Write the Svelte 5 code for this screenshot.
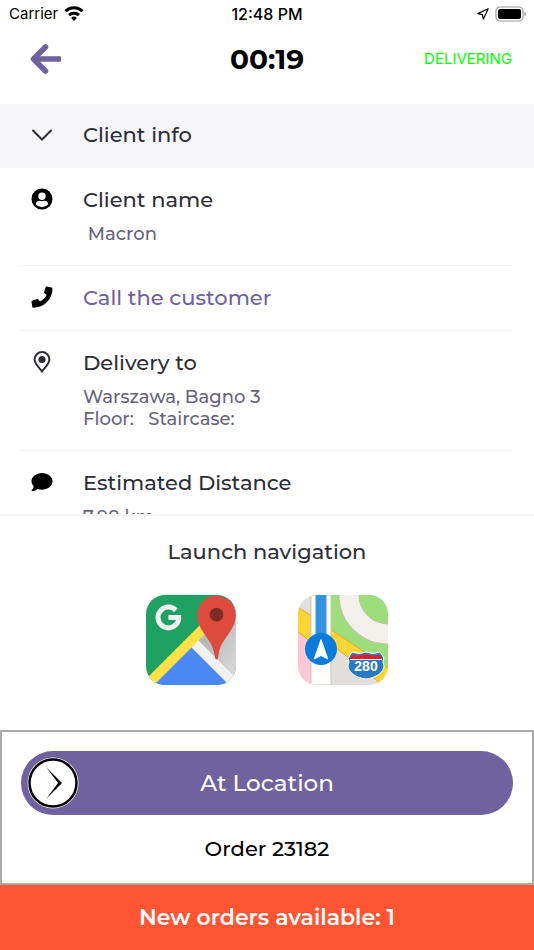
<script>
    let { elapsed = "00:19", status = "DELIVERING", orderNumber = 23182, newOrders = 1 } = $props();

    let clientInfoOpen = $state(true);

    let details = [
        { icon: "user", label: "Client name", value: " Macron" },
        { icon: "phone", label: "Call the customer", href: "tel:" },
        { icon: "pin", label: "Delivery to", value: "Warszawa, Bagno 3\nFloor:   Staircase:" },
        { icon: "comment", label: "Estimated Distance", value: "7.98 km" }
    ];

    function toggleClientInfo() {
        clientInfoOpen = !clientInfoOpen;
    }
</script>

<div class="app">
    <div class="status-bar">
        <div class="carrier">
            <span>Carrier</span>
            <svg width="20" height="16" viewBox="0 0 20 16" fill="none" stroke="#000" stroke-width="3">
                <path d="M1.5 5.2a12 12 0 0 1 17 0" />
                <path d="M5 9.2a7.2 7.2 0 0 1 10 0" />
                <path d="M7.1 12a4.2 4.2 0 0 1 5.8 0L10 15z" fill="#000" stroke="none" />
            </svg>
        </div>
        <time>12:48 PM</time>
        <div class="indicators">
            <svg width="12" height="12" viewBox="0 0 12 12" fill="none" stroke="#000" stroke-width="1.2" stroke-linejoin="round">
                <path d="M11.2.8.8 5.6l4.6 1 .9 4.6z" />
            </svg>
            <svg width="32" height="16" viewBox="0 0 32 16">
                <rect x="1" y="1" width="27" height="14" rx="4" fill="none" stroke="#999" stroke-width="1.2" />
                <rect x="3" y="3" width="23" height="10" rx="2" />
                <path d="M29.5 5.5c2 .7 2 4.3 0 5z" fill="#999" />
            </svg>
        </div>
    </div>

    <header>
        <button type="button" class="back" aria-label="Back">
            <svg width="32" height="30" viewBox="0 0 32 30" fill="none" stroke="#70629e" stroke-width="5.5" stroke-linecap="round" stroke-linejoin="round">
                <path d="M15.5 3 3.5 15l12 12" />
                <path d="M5 15h24" stroke-linecap="butt" />
                <path d="M28 12.3h2q1 0 1 1v3.4q0 1-1 1h-2z" fill="#70629e" stroke="none" />
            </svg>
        </button>
        <h1>{elapsed}</h1>
        <span class="status">{status}</span>
    </header>

    <button type="button" class="section-toggle" aria-expanded={clientInfoOpen} onclick={toggleClientInfo}>
        <span class="icon">
            <svg width="22" height="22" viewBox="0 0 22 22" fill="none" stroke="#2e2e3a" stroke-width="2" stroke-linecap="round">
                <path d="m2 6.5 9 9 9-9" />
            </svg>
        </span>
        <span>Client info</span>
    </button>

    <main>
        {#if clientInfoOpen}
            {#each details as detail}
                <section class="detail">
                    <span class="icon">
                        {#if detail.icon === "user"}
                            <svg width="22" height="22" viewBox="0 0 22 22">
                                <circle cx="11" cy="11" r="10.5" />
                                <circle cx="11" cy="8.3" r="3.7" fill="#fff" />
                                <path d="M4.7 16.2c.4-2.4 2.2-3.4 4-3.4 1.5.6 3.1.6 4.6 0 1.8 0 3.6 1 4 3.4a8.2 8.2 0 0 1-12.6 0z" fill="#fff" />
                            </svg>
                        {:else if detail.icon === "phone"}
                            <svg width="22" height="22" viewBox="0 0 22 22">
                                <path d="m15.6.5 5 .9q.9.2.9 1.1C21.5 13.3 13 21.7 2.3 21.7q-.9 0-1-.9L.5 16q-.1-.9.7-1.2l4.9-1.7q.8-.3 1.3.4l1.5 2.1c3-1.4 5.4-3.8 6.700-6.800l-2.100-1.600q-.7-.5-.4-1.300l1.500-4.700q.3-.8 1-.7z" />
                            </svg>
                        {:else if detail.icon === "pin"}
                            <svg width="22" height="22" viewBox="0 0 22 22" fill="none" stroke="#2e2e3a" stroke-width="2">
                                <path d="M11 20.3C8.5 16.8 3.6 12.9 3.6 8.5a7.4 7.4 0 0 1 14.8 0c0 4.4-4.9 8.3-7.4 11.8z" />
                                <circle cx="11" cy="8.5" r="3.6" fill="#2e2e3a" stroke="none" />
                            </svg>
                        {:else}
                            <svg width="22" height="22" viewBox="0 0 22 22">
                                <path d="M11 2C5.2 2 .5 5.7.5 10.3c0 2 .9 3.8 2.3 5.2C2.3 17.4.7 19.1.6 19.2c-.2.4 0 .8.4.8 2.5 0 4.4-1.2 5.5-2.1 1.4.5 2.9.8 4.5.8 5.8 0 10.500-3.800 10.500-8.400S16.800 2 11 2z" />
                            </svg>
                        {/if}
                    </span>
                    <div class="detail-body">
                        {#if detail.href}
                            <a href={detail.href}>{detail.label}</a>
                        {:else}
                            <h2>{detail.label}</h2>
                            <p>{detail.value}</p>
                        {/if}
                    </div>
                </section>
            {/each}
        {/if}
    </main>

    <section class="navigation">
        <h2>Launch navigation</h2>
        <div class="map-apps">
            <button type="button" aria-label="Google Maps">
                <svg width="90" height="90" viewBox="0 0 90 90">
                    <defs>
                        <clipPath id="google-tile"><rect width="90" height="90" rx="19" /></clipPath>
                        <linearGradient id="google-shade" x1="0" y1="0" x2="1" y2="1">
                            <stop offset="0.4" stop-color="#b8b8b8" />
                            <stop offset="1" stop-color="#dedede" />
                        </linearGradient>
                    </defs>
                    <g clip-path="url(#google-tile)">
                        <rect width="90" height="90" fill="#1fa261" />
                        <path d="M48 49 90 7v83z" fill="url(#google-shade)" />
                        <path d="M45 52 88 95H2z" fill="#4a89f3" />
                        <path d="m52 45 46 46-7 7-46-46z" fill="#f1f1f1" />
                        <path d="M54 30-4 88l8 6 55-55z" fill="#ffe047" />
                        <path d="M70.5 64.5c-1.5 0-1.5-2-2-5C66 43 51.2 36 51.2 20a19.3 19.3 0 0 1 38.6 0C89.8 36 75 43 72.5 59.5c-.5 3-.5 5-2 5z" fill="#dc4b3e" />
                        <circle cx="70.5" cy="19.7" r="6.9" fill="#7f2c27" />
                        <circle cx="22.4" cy="22.5" r="10.4" fill="none" stroke="#f1f1f1" stroke-width="5" stroke-dasharray="57 9" />
                        <rect x="22.4" y="20" width="12.6" height="5" fill="#f1f1f1" />
                    </g>
                </svg>
            </button>
            <button type="button" aria-label="Apple Maps">
                <svg width="90" height="90" viewBox="0 0 90 90">
                    <defs>
                        <clipPath id="apple-tile"><rect width="90" height="90" rx="19" /></clipPath>
                    </defs>
                    <g clip-path="url(#apple-tile)">
                        <rect width="90" height="90" fill="#e2dfda" />
                        <path d="M32 0h58v76L32 36z" fill="#9edd7b" />
                        <circle cx="90" cy="0" r="39" fill="none" stroke="#c5bfae" stroke-width="21" />
                        <circle cx="90" cy="0" r="39" fill="none" stroke="#f3f0ec" stroke-width="19" />
                        <path d="M0 36 14 47v43H0z" fill="#ffc8d5" />
                        <path d="m-2 11 16 10v27L-2 35zM32 34l60 40v22L32 48z" fill="#ffd536" stroke="#e9a52d" />
                        <path d="M13 0h20v90H13z" fill="#fff" stroke="#c9c5bd" />
                        <path d="M17.5 0h11v50h-11z" fill="#3393e2" />
                        <circle cx="23" cy="54" r="16" fill="#087bdc" />
                        <path d="M23 44.5 29.8 64 23 60.5 16.2 64z" fill="#fff" stroke="#fff" stroke-linejoin="round" />
                        <path d="M54 57q7 3 14 0 7 3 14 0l4 6q-2 3 0 8c0 6-8 12-18 13-10-1-18-7-18-13q2-5 0-8z" fill="#277bc3" stroke="#fff" />
                        <path d="M54 59.500q7 2 14-.5 7 2.500 14 .5l2 4.500H52z" fill="#dc202b" />
                        <path d="M52 64.500h32" stroke="#fff" />
                        <text x="68" y="76" text-anchor="middle">280</text>
                    </g>
                </svg>
            </button>
        </div>
    </section>

    <section class="actions">
        <button type="button" class="slide">
            <svg class="knob" width="52" height="52" viewBox="0 0 52 52">
                <circle cx="26" cy="26" r="25.5" fill="#fff" />
                <circle cx="26" cy="26" r="23.5" fill="#fff" stroke="#000" stroke-width="2.5" />
                <path d="M19.500 10.500 35 26 19.500 41.500 31 26z" />
            </svg>
            <span>At Location</span>
        </button>
        <p class="order">Order {orderNumber}</p>
    </section>

    <button type="button" class="new-orders">New orders available: {newOrders}</button>
</div>

<style>
    :global(body) {
        background: #fff;
    }

    .app {
        display: flex;
        flex-direction: column;
        height: 100vh;
        overflow: hidden;
        font-family: Montserrat, Inter, sans-serif;
        color: #2e2e3a;
    }

    button {
        padding: 0;
        border: 0;
        background: none;
        font: inherit;
        color: inherit;
        cursor: pointer;
    }

    svg {
        display: block;
        flex-shrink: 0;
    }

    h1,
    h2,
    p {
        margin: 0;
    }

    .status-bar,
    header {
        display: grid;
        grid-template-columns: 1fr auto 1fr;
        align-items: center;
        flex-shrink: 0;
        font-family: Inter, sans-serif;
        color: #000;
    }

    .status-bar {
        height: 27px;
        padding: 0 7px;
        font-size: 15px;
    }

    .status-bar time {
        font-size: 16px;
        font-weight: 500;
    }

    .carrier,
    .indicators {
        display: flex;
        align-items: center;
        gap: 6px;
    }

    .carrier {
        padding-left: 2px;
    }

    .indicators {
        justify-content: flex-end;
    }

    header {
        height: 77px;
        padding: 0 22px 14px;
        box-sizing: border-box;
    }

    .back {
        justify-self: start;
        padding-left: 8px;
    }

    h1 {
        font-family: Montserrat, Inter, sans-serif;
        font-size: 28px;
        font-weight: 700;
    }

    .status {
        justify-self: end;
        font-size: 15px;
        color: #00ff00;
    }

    .section-toggle {
        display: flex;
        align-items: center;
        flex-shrink: 0;
        height: 64px;
        padding: 0 31px 3px;
        background: #f6f6f8;
        font-size: 21px;
        font-weight: 500;
    }

    .icon {
        flex-shrink: 0;
        width: 52px;
    }

    main {
        flex: 1;
        min-height: 0;
        overflow: hidden;
        padding: 0 21px;
    }

    .detail {
        display: flex;
        padding: 20px 10px;
        border-bottom: 1px solid #f3f3f5;
    }

    h2,
    .detail a {
        font-size: 21px;
        font-weight: 500;
        line-height: 24px;
    }

    .detail a {
        color: #70629e;
        text-decoration: none;
    }

    .detail p {
        padding-top: 11px;
        font-size: 18px;
        font-weight: 500;
        line-height: 22px;
        color: #68647e;
        white-space: pre-wrap;
    }

    .navigation {
        flex-shrink: 0;
        padding: 24px 0 45px;
        border-top: 2px solid #f8f5f9;
        text-align: center;
    }

    .map-apps {
        display: flex;
        justify-content: center;
        gap: 62px;
        padding-top: 31px;
    }

    .map-apps text {
        font-family: "Liberation Sans", sans-serif;
        font-size: 14px;
        font-weight: 700;
        fill: #fff;
    }

    .actions {
        flex-shrink: 0;
        padding: 19px 19px 22px;
        border: 2px solid #aaa;
        text-align: center;
        color: #000;
    }

    .slide {
        position: relative;
        display: block;
        width: 100%;
        height: 64px;
        border-radius: 32px;
        background: #70629e;
        font-size: 23px;
        font-weight: 500;
        color: #fff;
    }

    .knob {
        position: absolute;
        top: 6px;
        left: 6px;
    }

    .order {
        padding-top: 22px;
        font-size: 21px;
        font-weight: 500;
        line-height: 24px;
    }

    .new-orders {
        flex-shrink: 0;
        height: 65px;
        background: #ff5533;
        font-size: 22px;
        font-weight: 600;
        color: #fff;
    }
</style>
